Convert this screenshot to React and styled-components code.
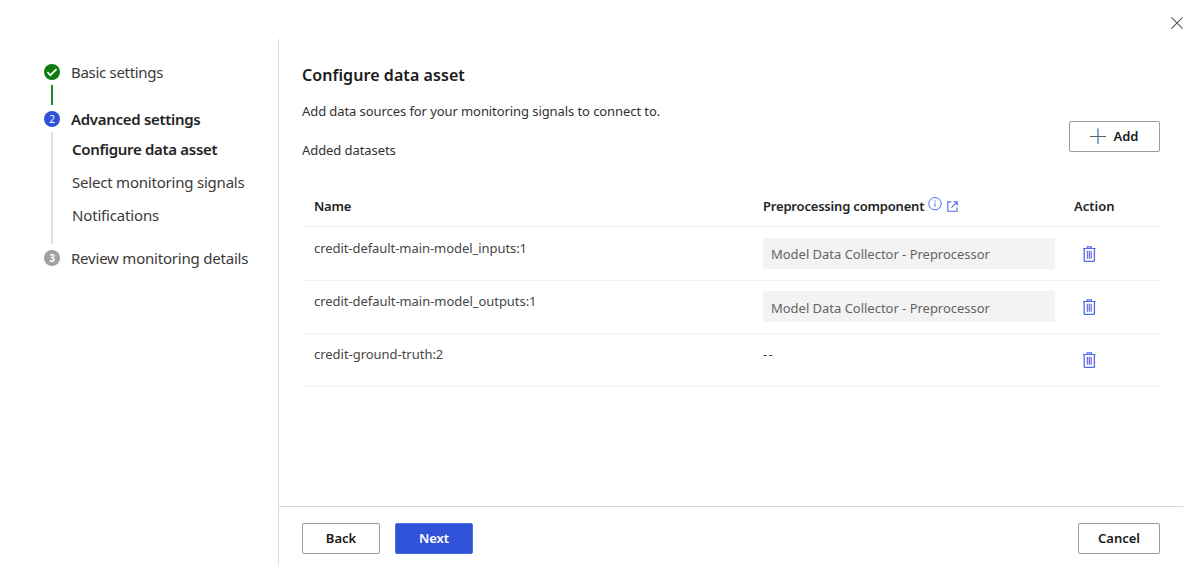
import React from "react";
import styled, { createGlobalStyle } from "styled-components";

const GlobalStyle = createGlobalStyle`
  *, *::before, *::after { box-sizing: border-box; }
  body {
    margin: 0;
    background: #fff;
    color: #323130;
    font-family: "Noto Sans", "Open Sans", sans-serif;
    font-size: 13px;
    line-height: 20px;
  }
`;

const Dialog = styled.div`
  display: flex;
  flex-direction: column;
  width: 1200px;
  height: 565px;
  padding-right: 17px;
  overflow: hidden;
`;

const TitleBar = styled.header`
  display: flex;
  flex: none;
  justify-content: flex-end;
  height: 39px;
  padding-top: 17px;
`;

const IconButton = styled.button`
  display: flex;
  align-items: center;
  justify-content: center;
  width: ${(p) => p.$size}px;
  height: ${(p) => p.$size}px;
  padding: 0;
  border: 0;
  background: none;
  svg { display: block; flex: none; }
`;

const Body = styled.div`
  display: flex;
  flex: 1;
  min-height: 0;
`;

const Nav = styled.nav`
  display: flex;
  flex-direction: column;
  flex: none;
  width: 278px;
  padding: 23px 0 0 44px;
`;

const Step = styled.div`
  display: grid;
  grid-template-columns: 16px 1fr;
  column-gap: 11px;
  align-items: start;
  height: ${(p) => p.$height}px;
`;

const Rail = styled.div`
  display: flex;
  flex-direction: column;
  align-items: center;
  height: 100%;
  padding-top: 2px;
`;

const Badge = styled.span`
  display: flex;
  flex: none;
  align-items: center;
  justify-content: center;
  width: 16px;
  height: 16px;
  border-radius: 50%;
  background: ${(p) => p.$color};
  color: #fff;
  font-size: 10px;
  font-weight: ${(p) => p.$weight || 400};
  line-height: 16px;
`;

const Connector = styled.span`
  width: 2px;
  height: ${(p) => p.$length}px;
  margin-top: 5px;
  background: ${(p) => p.$color};
`;

const StepText = styled.div`
  display: flex;
  flex-direction: column;
`;

const StepLabel = styled.span`
  font-size: 15px;
  font-weight: ${(p) => (p.$current ? 600 : 400)};
  color: ${(p) => (p.$current ? "#252423" : "#3b3a39")};
  letter-spacing: ${(p) => p.$track || 0}px;
  white-space: nowrap;
`;

const SubSteps = styled.div`
  display: flex;
  flex-direction: column;
  gap: 13px;
  padding: 10px 0 0 1px;
`;

const Main = styled.main`
  display: flex;
  flex: 1;
  flex-direction: column;
  border-left: 1px solid #d8d8d8;
`;

const Content = styled.section`
  flex: 1;
  padding: 26px 23px 0;
`;

const Heading = styled.h1`
  margin: 0 0 16px;
  font-size: 16px;
  font-weight: 600;
  line-height: 20px;
  letter-spacing: 0.07px;
  color: #1b1a19;
`;

const Intro = styled.div`
  display: flex;
  justify-content: space-between;
  height: 51px;
`;

const IntroText = styled.div`
  display: flex;
  flex-direction: column;
  gap: 19px;
`;

const Text = styled.span`
  letter-spacing: ${(p) => p.$track || 0}px;
  white-space: nowrap;
`;

const Button = styled.button`
  display: flex;
  align-items: center;
  justify-content: center;
  gap: 7px;
  width: ${(p) => p.$width}px;
  height: 31px;
  padding: 0 0 1px;
  border: 1px solid ${(p) => (p.$primary ? "#4c6cdd" : "#9b9a99")};
  border-radius: 2px;
  background: ${(p) => (p.$primary ? "#3052d8" : "#fff")};
  color: ${(p) => (p.$primary ? "#fff" : "#1b1a19")};
  font: 600 13px/20px "Noto Sans", "Open Sans", sans-serif;
  svg { display: block; flex: none; }
`;

const AddSlot = styled.div`
  padding-top: 20px;
`;

const Table = styled.div`
  margin-top: 34px;
`;

const Row = styled.div`
  display: grid;
  grid-template-columns: 449px 311px 1fr;
  align-items: start;
  height: ${(p) => p.$height}px;
  padding: ${(p) => p.$top}px 0 0 12px;
  border-bottom: 1px solid ${(p) => (p.$head ? "#ececec" : "#f3f2f1")};
  color: ${(p) => (p.$head ? "#252423" : "#484644")};
  font-weight: ${(p) => (p.$head ? 600 : 400)};
`;

const HeadCell = styled.div`
  display: flex;
  align-items: flex-start;
  white-space: nowrap;
  svg { display: block; flex: none; }
`;

const Icons = styled.span`
  display: flex;
  gap: 5px;
  margin-left: 4px;
  padding-top: 1px;
`;

const LowerIcon = styled.span`
  padding-top: 4px;
`;

const Field = styled.div`
  width: 292px;
  height: 31px;
  padding: ${(p) => p.$top}px 8px 0;
  border-radius: 2px;
  background: #f3f3f3;
  color: #666462;
  letter-spacing: -0.02px;
  white-space: nowrap;
`;

const TrashSlot = styled.div`
  padding: 8px 0 0 7px;
`;

const Footer = styled.footer`
  display: flex;
  flex: none;
  align-items: flex-start;
  gap: 15px;
  height: 59px;
  padding: 16px 23px 0;
  border-top: 1px solid #d8d8d8;
`;

const Spacer = styled.div`
  flex: 1;
`;

const CloseIcon = () => (
  <svg width="12" height="12" viewBox="0 0 12 12" fill="none" stroke="#555" strokeWidth="1.1">
    <path d="M.4.4l11.2 11.2M11.6.4L.4 11.6" />
  </svg>
);

const CheckIcon = () => (
  <svg width="16" height="16" viewBox="0 0 16 16" fill="none" stroke="#fff" strokeWidth="1.7">
    <path d="M3.4 8.2l3 3 6.1-6" />
  </svg>
);

const PlusIcon = () => (
  <svg width="16" height="16" viewBox="0 0 16 16" fill="none">
    <path d="M0 8.5h16" stroke="#5a5f66" />
    <path d="M8 .5v16" stroke="#3f78ad" strokeWidth="1.3" />
  </svg>
);

const InfoIcon = () => (
  <svg width="14" height="14" viewBox="0 0 14 14" fill="none" stroke="#4f6bed" strokeWidth="1">
    <circle cx="7" cy="6.7" r="6.2" />
    <path d="M7 5.8v4.2M7 3.4v1.3" />
  </svg>
);

const OpenIcon = () => (
  <svg width="11" height="11" viewBox="0 0 11 11" fill="none" stroke="#4f6bed" strokeWidth="1.1">
    <path d="M4.2.9H.8v9.3h9.3V6.4M6.3.8h3.9v3.9M10.1.9L4.4 6.6" />
  </svg>
);

const TrashIcon = () => (
  <svg width="13" height="16" viewBox="0 0 13 16" fill="none" stroke="#4f6bed">
    <path d="M0 2.5h12.6M4.2 2.5V.8h4.2v1.7" strokeWidth="1.2" />
    <path d="M1.2 2.5v12q0 1 1 1h8.2q1 0 1-1v-12" strokeWidth="1.3" />
    <path d="M4.4 4.8v8M6.3 4.8v8M8.2 4.8v8" stroke="#7a70dc" strokeWidth="1.3" />
  </svg>
);

const datasets = [
  { name: "credit-default-main-model_inputs:1", track: -0.06, component: "Model Data Collector - Preprocessor", height: 54, top: 11, fieldTop: 6 },
  { name: "credit-default-main-model_outputs:1", track: -0.05, component: "Model Data Collector - Preprocessor", height: 53, top: 10, fieldTop: 7 },
  { name: "credit-ground-truth:2", track: -0.03, component: null, height: 53, top: 10 },
];

export default function App() {
  return (
    <>
      <GlobalStyle />
      <Dialog>
        <TitleBar>
          <IconButton $size={12} aria-label="Close"><CloseIcon /></IconButton>
        </TitleBar>
        <Body>
          <Nav>
            <Step $height={47}>
              <Rail>
                <Badge $color="#107c10"><CheckIcon /></Badge>
                <Connector $color="#2a8a2a" $length={20} />
              </Rail>
              <StepLabel $track={-0.3}>Basic settings</StepLabel>
            </Step>
            <Step $height={139}>
              <Rail>
                <Badge $color="#3052d8">2</Badge>
                <Connector $color="#e0e0e0" $length={112} />
              </Rail>
              <StepText>
                <StepLabel $current $track={-0.3}>Advanced settings</StepLabel>
                <SubSteps>
                  <StepLabel $current $track={-0.31}>Configure data asset</StepLabel>
                  <StepLabel $track={-0.21}>Select monitoring signals</StepLabel>
                  <StepLabel $track={-0.17}>Notifications</StepLabel>
                </SubSteps>
              </StepText>
            </Step>
            <Step $height={20}>
              <Rail><Badge $color="#a0a0a0" $weight={700}>3</Badge></Rail>
              <StepLabel $track={-0.21}>Review monitoring details</StepLabel>
            </Step>
          </Nav>
          <Main>
            <Content>
              <Heading>Configure data asset</Heading>
              <Intro>
                <IntroText>
                  <Text $track={-0.08}>Add data sources for your monitoring signals to connect to.</Text>
                  <Text $track={-0.07}>Added datasets</Text>
                </IntroText>
                <AddSlot>
                  <Button $width={91}><PlusIcon />Add</Button>
                </AddSlot>
              </Intro>
              <Table>
                <Row $head $height={41} $top={10}>
                  <Text $track={-0.2}>Name</Text>
                  <HeadCell>
                    <Text $track={-0.19}>Preprocessing component</Text>
                    <Icons>
                      <InfoIcon />
                      <LowerIcon><OpenIcon /></LowerIcon>
                    </Icons>
                  </HeadCell>
                  <Text>Action</Text>
                </Row>
                {datasets.map((d) => (
                  <Row key={d.name} $height={d.height} $top={d.top}>
                    <Text $track={d.track}>{d.name}</Text>
                    {d.component ? <Field $top={d.fieldTop}>{d.component}</Field> : <Text $track={1.2}>--</Text>}
                    <TrashSlot>
                      <IconButton $size={16} aria-label="Delete"><TrashIcon /></IconButton>
                    </TrashSlot>
                  </Row>
                ))}
              </Table>
            </Content>
            <Footer>
              <Button $width={78}>Back</Button>
              <Button $width={78} $primary>Next</Button>
              <Spacer />
              <Button $width={82}>Cancel</Button>
            </Footer>
          </Main>
        </Body>
      </Dialog>
    </>
  );
}
